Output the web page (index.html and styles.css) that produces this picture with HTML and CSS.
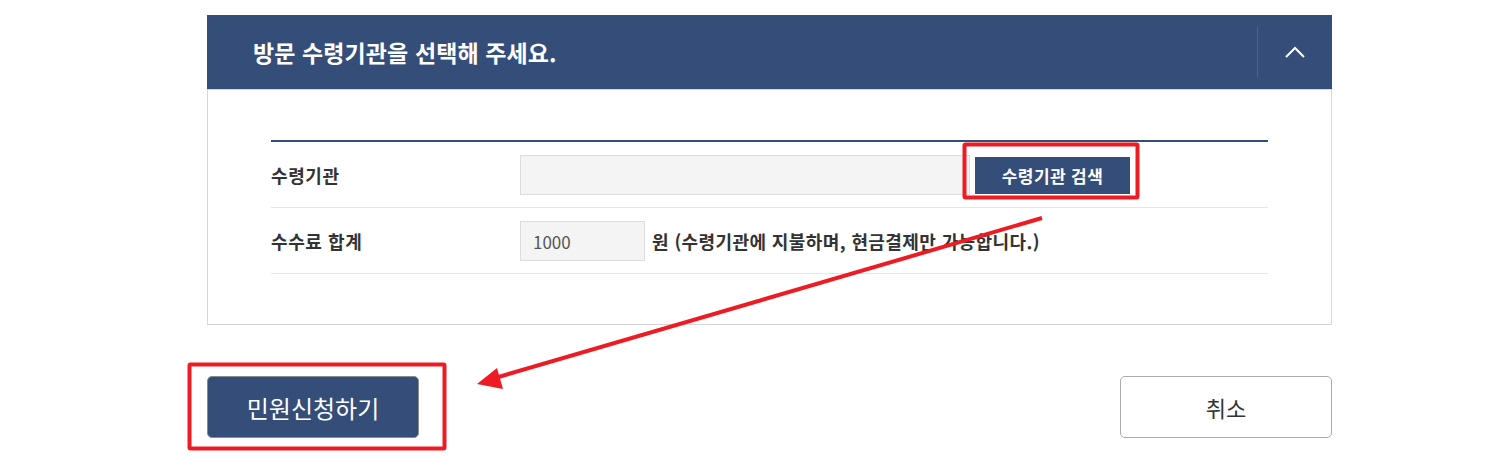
FILE: index.html
```html
<!DOCTYPE html>
<html lang="ko">

<head>
    <meta charset="UTF-8">
    <meta name="viewport" content="width=device-width, initial-scale=1.0">
    <title>방문 수령기관 선택</title>
    <link rel="stylesheet" href="styles.css">
</head>

<body>

    <div class="page">
        <div class="panel">
            <div class="panel-head">
                <h3 class="panel-title">방문 수령기관을 선택해 주세요.</h3>
                <button class="toggle" type="button" aria-label="접기">
                    <svg width="20" height="12" viewBox="0 0 20 12">
                        <path d="M1 11 L10 2 L19 11" fill="none" stroke="#fff" stroke-width="2" />
                    </svg>
                </button>
            </div>

            <div class="panel-body">
                <div class="form-table">
                    <div class="row">
                        <div class="label">수령기관</div>
                        <div class="field">
                            <input type="text" class="input input-wide" readonly>
                            <button class="btn-search" type="button">수령기관 검색</button>
                        </div>
                    </div>
                    <div class="row">
                        <div class="label">수수료 합계</div>
                        <div class="field">
                            <input type="text" class="input input-small" value="1000" readonly>
                            <span class="note">원 (수령기관에 지불하며, 현금결제만 가능합니다.)</span>
                        </div>
                    </div>
                </div>
            </div>
        </div>

        <div class="actions">
            <button class="btn btn-primary" type="button">민원신청하기</button>
            <button class="btn btn-cancel" type="button">취소</button>
        </div>
    </div>

    <!-- annotation layer: red boxes + arrow -->
    <svg class="marks" width="1492" height="462" viewBox="0 0 1492 462">
        <rect x="964.5" y="144.5" width="173" height="53" rx="1" fill="none" stroke="#ed1c24" stroke-width="4" />
        <rect x="189.5" y="364.5" width="255" height="84" rx="1" fill="none" stroke="#ed1c24" stroke-width="4" />
        <line x1="1042" y1="218" x2="495" y2="378" stroke="#ed1c24" stroke-width="4" />
        <polygon points="477,384 497,368 503,389" fill="#ed1c24" />
    </svg>

</body>

</html>
```

FILE: styles.css
```css
body {
    font-family: "Noto Sans CJK KR", "Liberation Sans", sans-serif;
    margin: 0;
    background-color: #fff;
    color: #333;
}

.page {
    width: 1125px;
    padding: 15px 0 0 207px;
}

.panel-head {
    display: flex;
    align-items: center;
    height: 74px;
    background-color: #354d79;
}

.panel-title {
    flex: 1;
    margin: 0;
    padding-left: 46px;
    font-size: 23px;
    font-weight: bold;
    color: #fff;
    letter-spacing: 0.1px;
}

.toggle {
    display: flex;
    align-items: center;
    justify-content: center;
    width: 75px;
    height: 50px;
    padding: 0;
    background: none;
    border: none;
    border-left: 1px solid #4b6291;
}

.panel-body {
    border: 1px solid #d6d6d6;
    padding: 50px 63px;
}

.form-table {
    border-top: 2px solid #354d79;
}

.row {
    display: flex;
    align-items: center;
    height: 40px;
    padding: 13px 0 12px;
    border-bottom: 1px solid #e6e6e6;
}

.label {
    width: 249px;
    font-size: 18px;
    font-weight: bold;
    color: #333;
    letter-spacing: 0.6px;
}

.field {
    display: flex;
    align-items: center;
}

.input {
    box-sizing: border-box;
    height: 40px;
    padding: 0 12px;
    background-color: #f4f4f4;
    border: 1px solid #dcdcdc;
    font-family: inherit;
    font-size: 17px;
    color: #555;
    outline: none;
}

.input-wide {
    width: 450px;
}

.input-small {
    width: 125px;
}

.btn-search {
    height: 37px;
    width: 155px;
    margin-left: 5px;
    background-color: #354d79;
    border: none;
    color: #fff;
    font-family: inherit;
    font-size: 17px;
    font-weight: bold;
    letter-spacing: 0.4px;
}

.note {
    margin-left: 7px;
    font-size: 18px;
    font-weight: bold;
    color: #333;
    letter-spacing: 0.4px;
}

.actions {
    display: flex;
    justify-content: space-between;
    margin-top: 51px;
}

.btn {
    width: 212px;
    height: 62px;
    border-radius: 5px;
    font-family: inherit;
    font-size: 22px;
}

.btn-primary {
    background-color: #354d79;
    border: 1px solid #8a8a8a;
    color: #fff;
    font-size: 24px;
}

.btn-cancel {
    background-color: #fff;
    border: 1px solid #ababab;
    color: #333;
}

.marks {
    position: absolute;
    top: 0;
    left: 0;
    pointer-events: none;
}
```
